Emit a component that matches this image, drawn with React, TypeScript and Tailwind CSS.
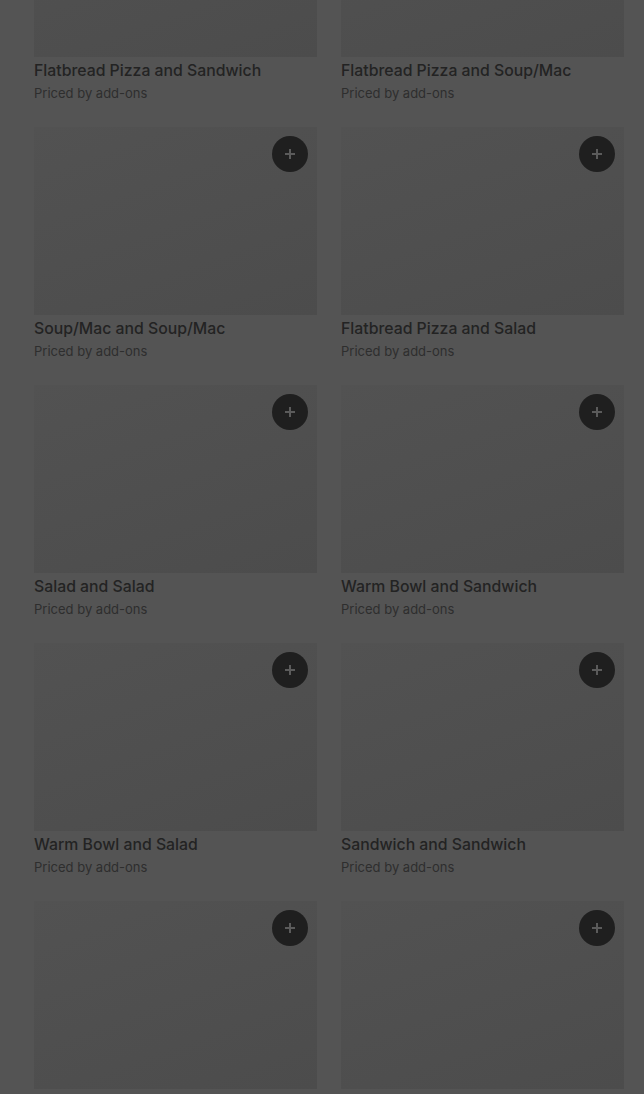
type Item = {
  title: string;
  note: string;
};

const items: Item[] = [
  { title: "Flatbread Pizza and Sandwich", note: "Priced by add-ons" },
  { title: "Flatbread Pizza and Soup/Mac", note: "Priced by add-ons" },
  { title: "Soup/Mac and Soup/Mac", note: "Priced by add-ons" },
  { title: "Flatbread Pizza and Salad", note: "Priced by add-ons" },
  { title: "Salad and Salad", note: "Priced by add-ons" },
  { title: "Warm Bowl and Sandwich", note: "Priced by add-ons" },
  { title: "Warm Bowl and Salad", note: "Priced by add-ons" },
  { title: "Sandwich and Sandwich", note: "Priced by add-ons" },
  { title: "Soup/Mac and Salad", note: "Priced by add-ons" },
  { title: "Warm Bowl and Soup/Mac", note: "Priced by add-ons" },
];

function PlusIcon() {
  return (
    <svg width="12" height="12" viewBox="0 0 12 12" fill="none">
      <path d="M6 1v10M1 6h10" stroke="#5b5b5b" strokeWidth="2" />
    </svg>
  );
}

function MenuCard({ title, note }: Item) {
  return (
    <div className="flex flex-col pb-6">
      <div className="relative h-[188px] bg-[linear-gradient(160deg,#525252,#4c4c4c)]">
        <button className="absolute right-[9px] top-[9px] flex h-9 w-9 items-center justify-center rounded-full bg-[#1f1f1f]">
          <PlusIcon />
        </button>
      </div>
      <p className="mt-[2px] text-[15.8px] font-medium leading-6 text-[#232323]">
        {title}
      </p>
      <p className="text-[13px] leading-5 text-[#2e2e2e]">{note}</p>
    </div>
  );
}

export default function App() {
  return (
    <div className="h-screen overflow-hidden bg-[#545454] font-['Inter',sans-serif]">
      <div className="-mt-[131px] grid grid-cols-2 gap-x-6 pl-[34px] pr-[20px]">
        {items.map((item) => (
          <MenuCard key={item.title} {...item} />
        ))}
      </div>
    </div>
  );
}
